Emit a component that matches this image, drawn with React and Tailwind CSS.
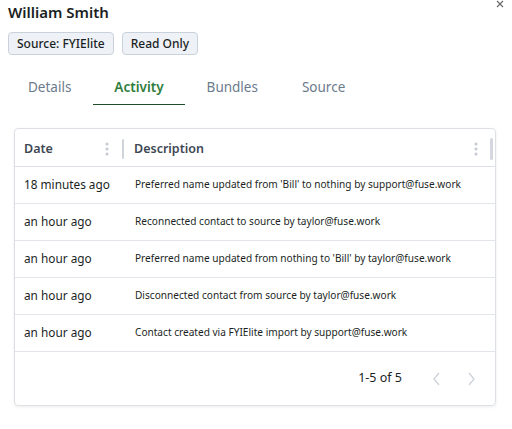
import React, { useState } from "react";

const rows = [
  { date: "18 minutes ago", desc: "Preferred name updated from 'Bill' to nothing by support@fuse.work" },
  { date: "an hour ago", desc: "Reconnected contact to source by taylor@fuse.work" },
  { date: "an hour ago", desc: "Preferred name updated from nothing to 'Bill' by taylor@fuse.work" },
  { date: "an hour ago", desc: "Disconnected contact from source by taylor@fuse.work" },
  { date: "an hour ago", desc: "Contact created via FYIElite import by support@fuse.work" },
];

const tabs = ["Details", "Activity", "Bundles", "Source"];

const Kebab = () => (
  <svg width="4" height="14" viewBox="0 0 4 14" className="fill-[#c4c9d2]">
    <circle cx="2" cy="2" r="1.5" />
    <circle cx="2" cy="7" r="1.5" />
    <circle cx="2" cy="12" r="1.5" />
  </svg>
);

const App = () => {
  const [active, setActive] = useState("Activity");

  return (
    <div className="relative w-[512px] h-[429px] bg-white text-[#1b1f24] font-['Noto_Sans',sans-serif]">
      {/* close */}
      <button className="absolute right-[8px] top-[0px]" aria-label="close">
        <svg width="8" height="8" viewBox="0 0 8 8" className="stroke-[#666] fill-none">
          <path d="M1 1 L7 7 M7 1 L1 7" strokeWidth="1.1" />
        </svg>
      </button>

      {/* Header */}
      <div className="px-[8px] pt-[1px]">
        <h2 className="text-[15px] font-semibold leading-[22px]">William Smith</h2>
        <div className="flex gap-[8px] mt-[9px]">
          <span className="px-[8px] h-[23px] flex items-center text-[12px] font-medium bg-[#eef2f7] border border-[#c9d1db] rounded-[4px]">
            Source: FYIElite
          </span>
          <span className="px-[8px] h-[23px] flex items-center text-[12px] font-medium bg-[#eef2f7] border border-[#c9d1db] rounded-[4px]">
            Read Only
          </span>
        </div>
      </div>

      {/* Tabs */}
      <div className="flex pl-[6px] mt-[16px]">
        {tabs.map((t) => (
          <button
            key={t}
            onClick={() => setActive(t)}
            className={
              t === active
                ? "px-[21px] h-[34px] text-[13.5px] font-semibold text-[#2f7d3b] border-b-[1.5px] border-[#1f4d2a]"
                : "px-[22px] h-[34px] text-[13.5px] text-[#6c7b8b] border-b-[1.5px] border-transparent"
            }
          >
            {t}
          </button>
        ))}
      </div>

      {/* Card */}
      <div className="mx-[14px] mt-[23px] w-[482px] border border-[#dde1e6] rounded-[4px] shadow-[0_1px_3px_rgba(0,0,0,0.08)]">
        <div className="flex items-center h-[38px] pt-[3px] border-b border-[#dde1e6]">
          <div className="w-[107px] pl-[9px] pr-[13px] flex items-center justify-between">
            <span className="text-[12.5px] font-semibold text-[#3e4754]">Date</span>
            <Kebab />
          </div>
          <div className="w-[2px] h-[20px] bg-[#cfd4db] rounded-full" />
          <div className="flex-1 pl-[10px] pr-[12px] flex items-center justify-between">
            <span className="text-[12.5px] font-semibold text-[#3e4754]">Description</span>
            <Kebab />
          </div>
          <div className="w-[3px] h-[22px] bg-[#d4d8de] rounded-full mr-[2px]" />
        </div>

        {rows.map((r, i) => (
          <div key={i} className="flex items-center h-[37px] border-b border-[#e2e5e9]">
            <div className="w-[120px] pl-[9px] text-[11.8px]">{r.date}</div>
            <div className="flex-1 text-[10.1px]">{r.desc}</div>
          </div>
        ))}

        <div className="flex items-center justify-end h-[53px] pr-[18px]">
          <span className="text-[12.5px] mr-[29px]">1-5 of 5</span>
          <svg width="12" height="16" viewBox="0 0 12 16" className="stroke-[#cfd4da] fill-none mr-[22px]">
            <path d="M8 2 L3 8 L8 14" strokeWidth="1.4" />
          </svg>
          <svg width="12" height="16" viewBox="0 0 12 16" className="stroke-[#cfd4da] fill-none">
            <path d="M4 2 L9 8 L4 14" strokeWidth="1.4" />
          </svg>
        </div>
      </div>
    </div>
  );
};

export default App;
